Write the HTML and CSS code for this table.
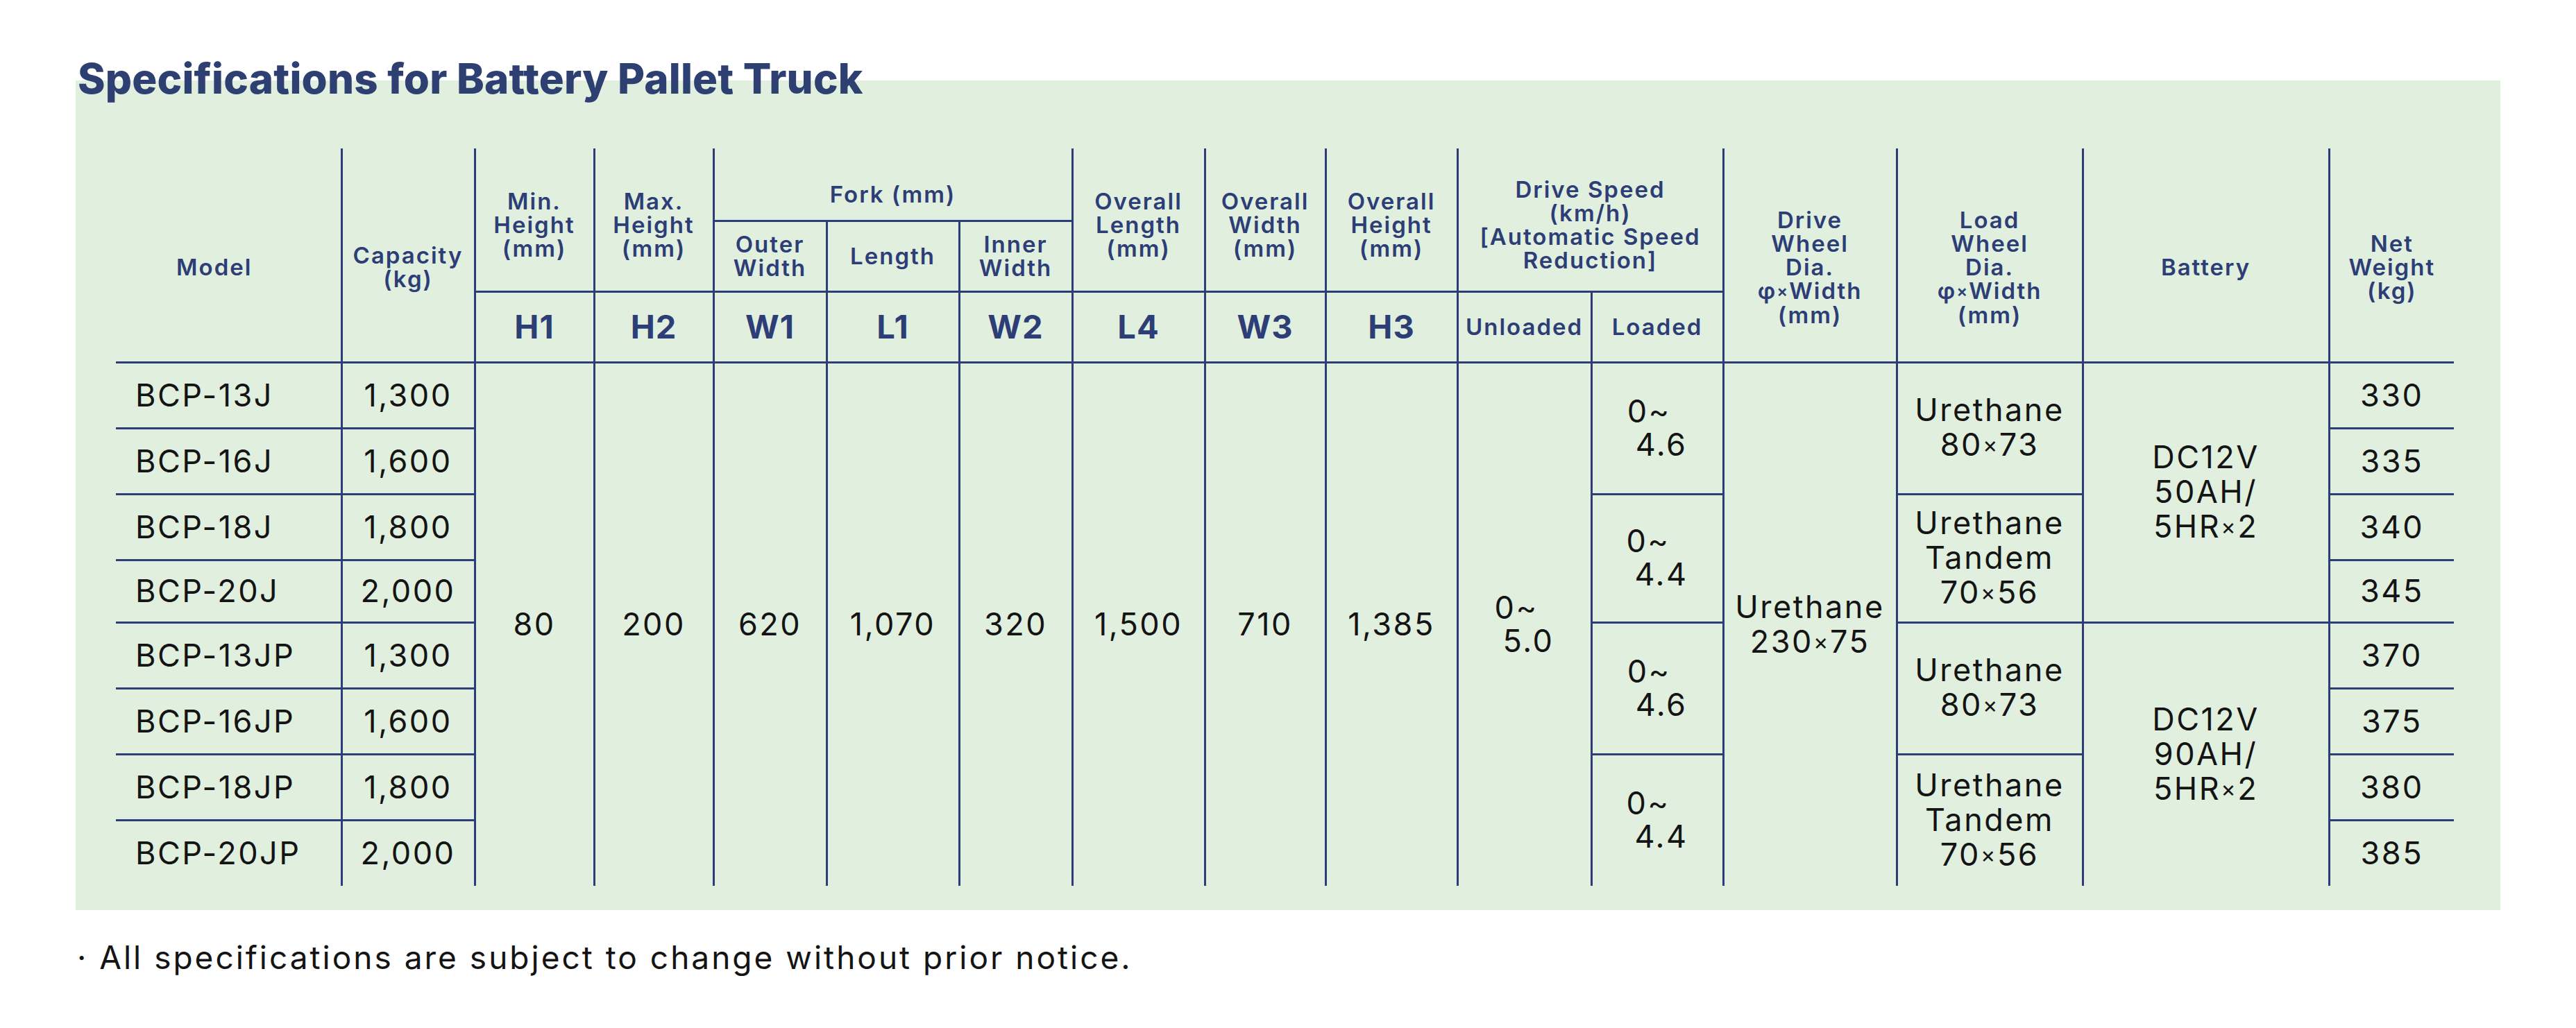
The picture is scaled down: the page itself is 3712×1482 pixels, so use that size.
FILE: index.html
```html
<!DOCTYPE html>
<html lang="en">
<head>
<meta charset="utf-8">
<title>Specifications for Battery Pallet Truck</title>
<link rel="stylesheet" href="styles.css">
</head>
<body>
<div class="sheet">
  <h1 class="title">Specifications for Battery Pallet Truck</h1>
  <div class="panel">
    <table class="spec">
      <colgroup>
        <col style="width:325px"><col style="width:192px"><col style="width:172px"><col style="width:172px">
        <col style="width:163px"><col style="width:191px"><col style="width:163px"><col style="width:191px">
        <col style="width:174px"><col style="width:190px"><col style="width:193px"><col style="width:190px">
        <col style="width:250px"><col style="width:268px"><col style="width:355px"><col style="width:180px">
      </colgroup>
      <thead>
        <tr class="h1r">
          <th rowspan="3" class="r3 model-h">Model</th>
          <th rowspan="3" class="r3">Capacity<br>(kg)</th>
          <th rowspan="2" class="r2">Min.<br>Height<br>(mm)</th>
          <th rowspan="2" class="r2">Max.<br>Height<br>(mm)</th>
          <th colspan="3" class="fork">Fork (mm)</th>
          <th rowspan="2" class="r2">Overall<br>Length<br>(mm)</th>
          <th rowspan="2" class="r2">Overall<br>Width<br>(mm)</th>
          <th rowspan="2" class="r2">Overall<br>Height<br>(mm)</th>
          <th rowspan="2" colspan="2" class="r2">Drive Speed<br>(km/h)<br>[Automatic Speed<br>Reduction]</th>
          <th rowspan="3" class="r3">Drive<br>Wheel<br>Dia.<br>φ<span class="x">×</span>Width<br>(mm)</th>
          <th rowspan="3" class="r3">Load<br>Wheel<br>Dia.<br>φ<span class="x">×</span>Width<br>(mm)</th>
          <th rowspan="3" class="r3">Battery</th>
          <th rowspan="3" class="r3">Net<br>Weight<br>(kg)</th>
        </tr>
        <tr class="h2r">
          <th>Outer<br>Width</th>
          <th>Length</th>
          <th>Inner<br>Width</th>
        </tr>
        <tr class="h3r">
          <th class="code">H1</th>
          <th class="code">H2</th>
          <th class="code">W1</th>
          <th class="code">L1</th>
          <th class="code">W2</th>
          <th class="code">L4</th>
          <th class="code">W3</th>
          <th class="code">H3</th>
          <th>Unloaded</th>
          <th>Loaded</th>
        </tr>
      </thead>
      <tbody>
        <tr class="row">
          <td class="model">BCP-13J</td>
          <td>1,300</td>
          <td rowspan="8">80</td>
          <td rowspan="8">200</td>
          <td rowspan="8">620</td>
          <td rowspan="8">1,070</td>
          <td rowspan="8">320</td>
          <td rowspan="8">1,500</td>
          <td rowspan="8">710</td>
          <td rowspan="8">1,385</td>
          <td rowspan="8"><span class="rng">0~<br>5.0</span></td>
          <td rowspan="2"><span class="rng">0~<br>4.6</span></td>
          <td rowspan="8">Urethane<br>230<span class="x">×</span>75</td>
          <td rowspan="2">Urethane<br>80<span class="x">×</span>73</td>
          <td rowspan="4">DC12V<br>50AH/<br>5HR<span class="x">×</span>2</td>
          <td>330</td>
        </tr>
        <tr class="row">
          <td class="model">BCP-16J</td>
          <td>1,600</td>
          <td>335</td>
        </tr>
        <tr class="row">
          <td class="model">BCP-18J</td>
          <td>1,800</td>
          <td rowspan="2"><span class="rng">0~<br>4.4</span></td>
          <td rowspan="2">Urethane<br>Tandem<br>70<span class="x">×</span>56</td>
          <td>340</td>
        </tr>
        <tr class="row short">
          <td class="model">BCP-20J</td>
          <td>2,000</td>
          <td>345</td>
        </tr>
        <tr class="row">
          <td class="model">BCP-13JP</td>
          <td>1,300</td>
          <td rowspan="2"><span class="rng">0~<br>4.6</span></td>
          <td rowspan="2">Urethane<br>80<span class="x">×</span>73</td>
          <td rowspan="4">DC12V<br>90AH/<br>5HR<span class="x">×</span>2</td>
          <td>370</td>
        </tr>
        <tr class="row">
          <td class="model">BCP-16JP</td>
          <td>1,600</td>
          <td>375</td>
        </tr>
        <tr class="row">
          <td class="model">BCP-18JP</td>
          <td>1,800</td>
          <td rowspan="2"><span class="rng">0~<br>4.4</span></td>
          <td rowspan="2">Urethane<br>Tandem<br>70<span class="x">×</span>56</td>
          <td>380</td>
        </tr>
        <tr class="row">
          <td class="model">BCP-20JP</td>
          <td>2,000</td>
          <td>385</td>
        </tr>
      </tbody>
    </table>
  </div>
  <p class="note">· All specifications are subject to change without prior notice.</p>
</div>
</body>
</html>
```
FILE: styles.css
```css
html, body {
  margin: 0;
  padding: 0;
  background: #ffffff;
}

body {
  font-family: Inter, "Open Sans", "Noto Sans", sans-serif;
  color: #141414;
}

.sheet {
  margin-left: 109px;
  width: 3494px;
  padding-top: 83px;
}

.title {
  position: relative;
  z-index: 1;
  margin: 0 0 0 3px;
  font-size: 60px;
  line-height: 60px;
  font-weight: 800;
  color: #2e3f72;
  letter-spacing: 0.2px;
}

.panel {
  margin-top: -27px;
  background: #e1efdf;
  padding: 98px 0 35px 58px;
}

.spec {
  border-collapse: collapse;
  border-style: hidden;
  table-layout: fixed;
  width: 3369px;
}

.spec th,
.spec td {
  border: 3px solid #2d3e76;
  padding: 0;
  text-align: center;
  vertical-align: middle;
}

.spec th {
  color: #2d3e76;
  font-size: 33px;
  line-height: 34px;
  font-weight: 600;
  letter-spacing: 2px;
}

.h1r { height: 104px; }
.h2r { height: 102px; }
.h3r { height: 102px; }

.spec th.r3 { padding-top: 36px; }
.spec th.r2 { padding-top: 16px; }
.spec th.fork { padding-top: 30px; }
.spec th.model-h { padding-right: 40px; }

.spec th.code {
  font-size: 47px;
  font-weight: 700;
  letter-spacing: 1px;
}

.spec td {
  font-size: 45px;
  line-height: 50px;
  font-weight: 400;
  color: #141414;
  letter-spacing: 2.5px;
}

.row { height: 95px; }
.row.short { height: 90px; }

.spec td.model {
  text-align: left;
  padding-left: 28px;
}

.x {
  font-size: 0.72em;
  vertical-align: 0.12em;
}

.rng {
  display: inline-block;
  text-align: left;
  line-height: 48px;
  padding-left: 12px;
  text-indent: -12px;
}

.note {
  margin: 40px 0 0 2px;
  font-size: 46px;
  line-height: 56px;
  color: #141414;
  letter-spacing: 3px;
}
```
